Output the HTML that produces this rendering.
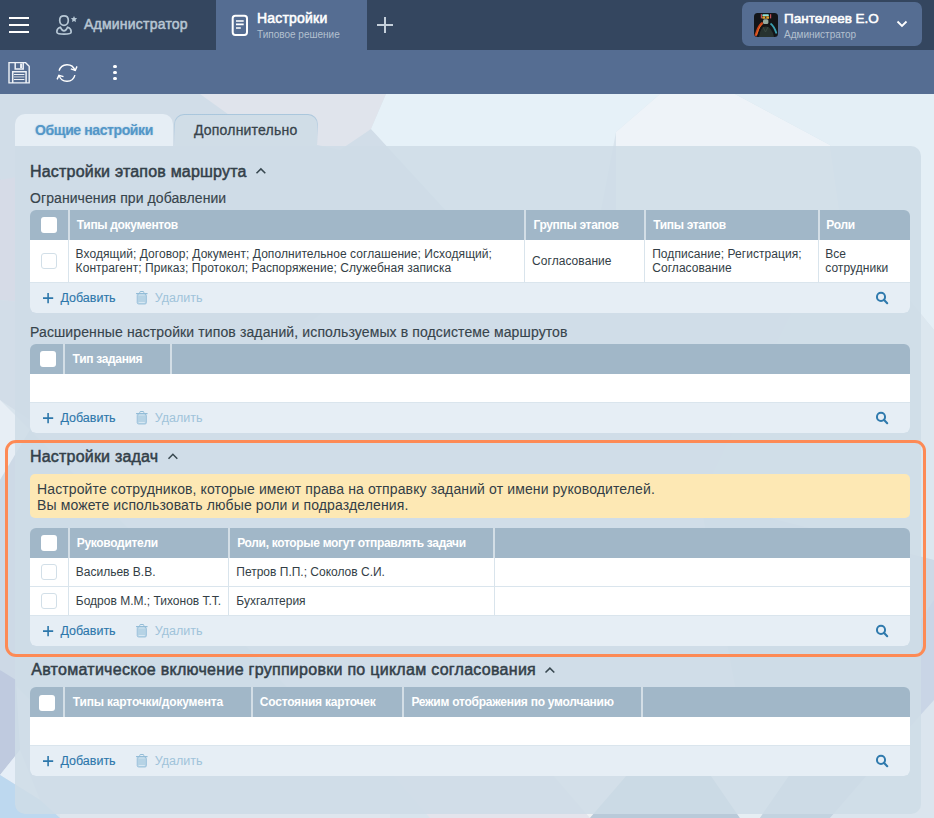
<!DOCTYPE html>
<html><head><meta charset="utf-8">
<style>
*{box-sizing:border-box;margin:0;padding:0}
html,body{width:934px;height:818px;overflow:hidden;font-family:"Liberation Sans",sans-serif;}
body{position:relative;background:#dbe6ef;}
.a{position:absolute}
.t{position:absolute;white-space:nowrap;line-height:1}
.h{font-size:16px;color:#334049;letter-spacing:0.2px;-webkit-text-stroke:0.5px #334049}
.sub{font-size:14px;color:#37444c;letter-spacing:0.08px;-webkit-text-stroke:0.15px #37444c}
.th{position:absolute;white-space:nowrap;line-height:1;color:#fff;font-weight:bold;font-size:12px;letter-spacing:-0.32px}
.td{position:absolute;white-space:nowrap;font-size:12px;line-height:14px;color:#333e46}
.thead{position:absolute;height:30px;background:#a1b7c8}
.hsep{position:absolute;width:2px;height:30px;background:#d3dee6}
.bsep{position:absolute;width:1px;background:#d9e4ec}
.cbh{position:absolute;width:16px;height:16px;border-radius:3px;background:#fff}
.cbr{position:absolute;width:16px;height:16px;border-radius:3px;background:#fff;border:1px solid #d2dfe8}
.row{position:absolute;background:#fff}
.rline{position:absolute;height:1px;background:#dae5ed}
.foot{position:absolute;height:30px;background:#e6eef5;border-radius:0 0 6px 6px}
.add{font-size:12.5px;color:#2d77ab;-webkit-text-stroke:0.12px #2d77ab}
.del{font-size:12.5px;color:#9fc3da}
</style></head>
<body>
<!-- background -->
<svg class="a" style="left:0;top:0" width="934" height="818" viewBox="0 0 934 818">
  <rect x="0" y="94" width="934" height="724" fill="#d9e4ed"/>
  <polygon points="0,94 386,94 371,129 450,215 300,330 0,300" fill="#d1dde8"/>
  <polygon points="0,180 230,140 300,330 0,300" fill="#d6dbe7"/>
  <polygon points="200,94 386,94 371,129 340,150 250,130" fill="#e0e4ec"/>
  <polygon points="386,94 660,94 616,132 600,215 450,215 371,129" fill="#e6f1f8"/>
  <polygon points="660,94 735,94 830,145 840,215 616,215 616,132" fill="#eef3f8"/>
  <polygon points="735,94 934,94 934,330 840,215 830,145" fill="#e4eff6"/>
  <polygon points="0,300 300,330 30,420 0,400" fill="#d2dde8"/>
  <polygon points="0,400 30,430 0,480" fill="#e7eef5"/>
  <polygon points="0,480 30,430 300,700 30,700 0,670" fill="#cdd9e6"/>
  <polygon points="0,670 16,680 20,750 0,775" fill="#bfcadf"/>
  <polygon points="0,775 20,750 40,800" fill="#e6eef7"/>
  <polygon points="0,775 40,800 60,818 0,818" fill="#bdd8ef"/>
  <polygon points="934,330 840,215 700,500 934,560" fill="#dce7ef"/>
  <polygon points="934,560 700,500 760,818 934,818" fill="#cdd9e6"/>
  <polygon points="921,620 934,600 934,818 921,818" fill="#c9d5e6"/>
  <polygon points="380,760 540,760 590,818 430,818" fill="#e4e4ec"/>
  <polygon points="540,760 640,760 590,818" fill="#f0f2f4"/>
  <polygon points="640,760 700,760 740,818 590,818" fill="#b9cad9"/>
  <polygon points="700,760 800,760 760,818 740,818" fill="#e6eef3"/>
  <polygon points="800,760 880,760 830,818 760,818" fill="#c3d3e0"/>
  <polygon points="880,760 934,700 934,818 830,818" fill="#dbe5ee"/>
  <rect x="60" y="814" width="330" height="4" fill="#dfe6ee"/>
</svg>

<div class="a" style="left:0;top:0;width:934px;height:50px;background:#34465f"></div>
<div class="a" style="left:0;top:50px;width:934px;height:44px;background:#556d92"></div>
<div class="a" style="left:216px;top:0;width:151px;height:50px;background:#556d92"></div>

<!-- hamburger -->
<div class="a" style="left:9px;top:17px;width:20px;height:2px;background:#fff"></div>
<div class="a" style="left:9px;top:24px;width:20px;height:2px;background:#fff"></div>
<div class="a" style="left:9px;top:31px;width:20px;height:2px;background:#fff"></div>

<!-- user star icon -->
<svg class="a" style="left:50px;top:10px" width="32" height="30" viewBox="0 0 32 30">
  <path d="M14 5.9C17 5.9 18.3 7.8 18.3 10.2C18.3 13.2 16.3 15.3 14 15.3C11.7 15.3 9.7 13.2 9.7 10.2C9.7 7.8 11 5.9 14 5.9Z" fill="none" stroke="#b7c8d6" stroke-width="1.7"/>
  <path d="M10.3 17.2Q12 20.9 14 20.9Q16 20.9 17.7 17.2Q21.1 18.4 21.1 21.2V22.3Q21.1 24.1 14 24.1Q6.9 24.1 6.9 22.3V21.2Q6.9 18.4 10.3 17.2Z" fill="none" stroke="#b7c8d6" stroke-width="1.7"/>
  <path d="M24 6l0.95 2.05 2.25 0.25-1.65 1.5 0.45 2.2-2-1.1-2 1.1 0.45-2.2-1.65-1.5 2.25-0.25z" fill="#b7c8d6"/>
</svg>
<div class="t" style="left:84px;top:17.2px;font-size:14px;letter-spacing:0.22px;color:#b8c6d3;-webkit-text-stroke:0.5px #b8c6d3">Администратор</div>

<!-- doc icon -->
<svg class="a" style="left:224px;top:8px" width="32" height="34" viewBox="0 0 32 34">
  <rect x="8.7" y="7.65" width="14.3" height="19.3" rx="2.6" fill="none" stroke="#fff" stroke-width="2"/>
  <path d="M12 13h7.7M12 16.4h7.7M12 20h4.8" stroke="#fff" stroke-width="1.6"/>
</svg>
<div class="t" style="left:257px;top:11.2px;font-size:14px;letter-spacing:0.2px;color:#fff;-webkit-text-stroke:0.55px #fff">Настройки</div>
<div class="t" style="left:257px;top:29.5px;font-size:10px;color:#b3c0cf">Типовое решение</div>
<!-- plus -->
<div class="a" style="left:377px;top:24px;width:16px;height:2px;background:#c5d0db"></div>
<div class="a" style="left:384px;top:17px;width:2px;height:16px;background:#c5d0db"></div>

<!-- user box -->
<div class="a" style="left:742px;top:2px;width:180px;height:44px;background:#556d92;border-radius:7px"></div>
<svg class="a" style="left:754px;top:13px" width="24" height="24" viewBox="0 0 24 24">
  <defs><clipPath id="av"><rect width="24" height="24" rx="3.5"/></clipPath>
  <filter id="gl" x="-50%" y="-50%" width="200%" height="200%"><feGaussianBlur stdDeviation="0.6"/></filter></defs>
  <g clip-path="url(#av)">
  <rect width="24" height="24" fill="#131518"/>
  <path d="M5 24Q6 14 12 13.5Q18 14 20 24Z" fill="#27322e"/>
  <path d="M1.5 23L4 16Q6 11 8.8 9.8" stroke="#c8421c" stroke-width="2.4" fill="none" filter="url(#gl)"/>
  <path d="M2.5 22L4.5 16.5Q6 12.5 8.5 11" stroke="#f07a2a" stroke-width="0.8" fill="none"/>
  <path d="M16.5 10.5Q20 13 22.5 20.5" stroke="#3a9fb0" stroke-width="1.8" fill="none" filter="url(#gl)"/>
  <rect x="9" y="6.3" width="5.4" height="4.8" rx="1.5" fill="#95ab9f"/>
  <rect x="8.3" y="1.2" width="6.6" height="1.9" rx="0.9" fill="#8fe2d8"/>
  <rect x="8.3" y="3.2" width="6.8" height="2.6" rx="0.9" fill="#e0a02e"/>
  <rect x="11" y="3.6" width="1.4" height="1.8" fill="#243442"/>
  <rect x="6.8" y="1.2" width="1.2" height="4.2" fill="#c0525a"/>
  <rect x="16" y="1.2" width="1.2" height="4.2" fill="#c0525a"/>
  <path d="M9 14L11.5 19L14 14" stroke="#3e4c44" stroke-width="0.8" fill="none"/>
  </g>
</svg>
<div class="t" style="left:784px;top:11.5px;font-size:13.5px;letter-spacing:0px;color:#fff;-webkit-text-stroke:0.55px #fff">Пантелеев Е.О</div>
<div class="t" style="left:784px;top:29.6px;font-size:10px;color:#b3c0cf">Администратор</div>
<svg class="a" style="left:894px;top:17px" width="16" height="14" viewBox="0 0 16 14"><path d="M3.5 4.5l4.5 4.5 4.5-4.5" fill="none" stroke="#fff" stroke-width="1.8"/></svg>

<!-- toolbar icons -->
<svg class="a" style="left:4px;top:58px" width="30" height="30" viewBox="0 0 30 30">
  <path d="M5 4.65H21.6L25.2 8.3V24.9H5Z" fill="none" stroke="#eef2f7" stroke-width="1.4"/>
  <path d="M11.2 4.65V10.9H19.2V4.65" fill="none" stroke="#eef2f7" stroke-width="1.5"/>
  <rect x="16.1" y="5.5" width="1.9" height="4.5" fill="#eef2f7"/>
  <path d="M8.7 24.9V13.8H22.1V24.9" fill="none" stroke="#eef2f7" stroke-width="1.5"/>
  <path d="M9.9 16.5H20.4M9.9 21.5H20.4" stroke="#eef2f7" stroke-width="1"/>
  <path d="M9.9 18.9H20.4" stroke="#c3cbd6" stroke-width="1.1"/>
</svg>
<svg class="a" style="left:52px;top:58px" width="30" height="30" viewBox="0 0 30 30">
  <path d="M7.1 12.8A8.2 8.2 0 0 1 22.9 12.6" fill="none" stroke="#fff" stroke-width="1.4"/>
  <path d="M18.8 10.9L23.3 12.3L25 8.4" fill="none" stroke="#fff" stroke-width="1.4"/>
  <path d="M22.9 17.1A8.2 8.2 0 0 1 7.1 17.4" fill="none" stroke="#fff" stroke-width="1.4"/>
  <path d="M11.5 18.6L6.9 17.4L5.1 21.4" fill="none" stroke="#fff" stroke-width="1.4"/>
</svg>
<div class="a" style="left:113px;top:64.7px;width:4px;height:3.6px;border-radius:1.5px;background:#fff"></div>
<div class="a" style="left:113px;top:70.7px;width:4px;height:3.6px;border-radius:1.5px;background:#fff"></div>
<div class="a" style="left:113px;top:76.7px;width:4px;height:3.6px;border-radius:1.5px;background:#fff"></div>

<!-- tabs -->
<div class="a" style="left:15px;top:114px;width:158px;height:32px;background:rgba(232,239,246,0.9);border-radius:10px 10px 0 0"></div>
<div class="a" style="left:174px;top:114px;width:144px;height:32px;background:linear-gradient(to bottom,#a9c6dc,rgba(169,198,220,0.2) 70%,rgba(169,198,220,0));border-radius:10px 10px 0 0"></div><div class="a" style="left:175px;top:115px;width:142px;height:31px;background:#d0dde7;border-radius:9px 9px 0 0"></div>
<div class="t" style="left:35px;top:123.2px;font-size:14px;font-weight:bold;letter-spacing:-0.4px;color:#5497c8;text-shadow:0 0 1.5px rgba(84,151,200,0.55)">Общие настройки</div>
<div class="t" style="left:194px;top:123.2px;font-size:14px;letter-spacing:0.2px;color:#37434b;-webkit-text-stroke:0.3px #37434b">Дополнительно</div>

<!-- main panel -->
<div class="a" style="left:15px;top:146px;width:906px;height:668px;background:rgba(206,220,230,0.86);border-radius:0 10px 10px 10px"></div>

<!-- Section 1 -->
<div class="t h" style="left:30px;top:164.3px">Настройки этапов маршрута</div>
<svg class="a" style="left:252px;top:164px" width="18" height="14" viewBox="0 0 18 14"><path d="M4.5 9.3l4.4-4.4 4.4 4.4" fill="none" stroke="#37474f" stroke-width="1.5"/></svg>
<div class="t sub" style="left:30px;top:190.9px">Ограничения при добавлении</div>

<!-- TABLES -->
<div class="a" style="left:30px;top:210px;width:880px;height:103px;border-radius:6px;overflow:hidden">
<div class="thead" style="left:0;top:0;width:880px"></div>
<div class="row" style="left:0;top:30px;width:880px;height:43px"></div>
<div class="rline" style="left:0;top:72px;width:880px"></div>
<div class="foot" style="left:0;top:73px;width:880px;height:30px"></div>
<div class="hsep" style="left:38px;top:0"></div>
<div class="hsep" style="left:494px;top:0"></div>
<div class="hsep" style="left:614px;top:0"></div>
<div class="hsep" style="left:788px;top:0"></div>
<div class="bsep" style="left:38px;top:30px;height:42px"></div>
<div class="bsep" style="left:494px;top:30px;height:42px"></div>
<div class="bsep" style="left:614px;top:30px;height:42px"></div>
<div class="bsep" style="left:788px;top:30px;height:42px"></div>
</div>
<div class="cbh" style="left:41px;top:217px"></div>
<div class="cbr" style="left:41px;top:253px"></div>
<div class="th" style="left:76.8px;top:218.84px;">Типы документов</div>
<div class="th" style="left:533.4px;top:218.84px;">Группы этапов</div>
<div class="th" style="left:653.2px;top:218.84px;">Типы этапов</div>
<div class="th" style="left:826.3px;top:218.84px;">Роли</div>
<div class="td" style="left:75.6px;top:246.5px;letter-spacing:0.06px">Входящий; Договор; Документ; Дополнительное соглашение; Исходящий;<br>Контрагент; Приказ; Протокол; Распоряжение; Служебная записка</div>
<div class="td" style="left:532px;top:254.3px;letter-spacing:0.06px">Согласование</div>
<div class="td" style="left:652.2px;top:246.5px;letter-spacing:0.06px">Подписание; Регистрация;<br>Согласование</div>
<div class="td" style="left:825.2px;top:246.5px;letter-spacing:0.06px">Все<br>сотрудники</div>
<svg class="a" style="left:43.1px;top:293px" width="11" height="11" viewBox="0 0 11 11"><path d="M5.1 0V10.2M0 5.1H10.2" stroke="#2d77ab" stroke-width="1.6"/></svg>
<div class="t add" style="left:60.4px;top:291.92px">Добавить</div>
<svg class="a" style="left:136.3px;top:291px" width="13" height="14" viewBox="0 0 13 14"><path d="M3.6 1.9L4.2 0.5H7.4L8 1.9" fill="none" stroke="#92bcd7" stroke-width="1"/><rect x="1.2" y="3.3" width="9.2" height="9.7" rx="1.4" fill="#b6d3e5" stroke="#98c0da" stroke-width="0.9"/><rect x="0" y="1.9" width="11.6" height="1.3" rx="0.4" fill="#92bcd7"/><rect x="2.7" y="3.5" width="6.1" height="0.8" fill="#e0edf5"/><rect x="2.7" y="11.1" width="6.1" height="0.8" fill="#e0edf5"/></svg>
<div class="t del" style="left:154.8px;top:291.92px">Удалить</div>
<svg class="a" style="left:874px;top:290px" width="16" height="16" viewBox="0 0 16 16"><circle cx="7" cy="6.9" r="4.05" fill="none" stroke="#2f7aad" stroke-width="2"/><path d="M9.9 9.8L13.2 13.2" stroke="#2f7aad" stroke-width="2.1" stroke-linecap="round"/></svg>
<div class="t sub" style="left:30px;top:324.6px;letter-spacing:0.12px">Расширенные настройки типов заданий, используемых в подсистеме маршрутов</div>
<div class="a" style="left:30px;top:344px;width:880px;height:89px;border-radius:6px;overflow:hidden">
<div class="thead" style="left:0;top:0;width:880px"></div>
<div class="row" style="left:0;top:30px;width:880px;height:29px"></div>
<div class="rline" style="left:0;top:58px;width:880px"></div>
<div class="foot" style="left:0;top:59px;width:880px;height:30px"></div>
<div class="hsep" style="left:33px;top:0"></div>
<div class="hsep" style="left:140px;top:0"></div>
</div>
<div class="cbh" style="left:40px;top:351px"></div>
<div class="th" style="left:72.6px;top:352.84px;">Тип задания</div>
<svg class="a" style="left:43.1px;top:413px" width="11" height="11" viewBox="0 0 11 11"><path d="M5.1 0V10.2M0 5.1H10.2" stroke="#2d77ab" stroke-width="1.6"/></svg>
<div class="t add" style="left:60.4px;top:411.92px">Добавить</div>
<svg class="a" style="left:136.3px;top:411px" width="13" height="14" viewBox="0 0 13 14"><path d="M3.6 1.9L4.2 0.5H7.4L8 1.9" fill="none" stroke="#92bcd7" stroke-width="1"/><rect x="1.2" y="3.3" width="9.2" height="9.7" rx="1.4" fill="#b6d3e5" stroke="#98c0da" stroke-width="0.9"/><rect x="0" y="1.9" width="11.6" height="1.3" rx="0.4" fill="#92bcd7"/><rect x="2.7" y="3.5" width="6.1" height="0.8" fill="#e0edf5"/><rect x="2.7" y="11.1" width="6.1" height="0.8" fill="#e0edf5"/></svg>
<div class="t del" style="left:154.8px;top:411.92px">Удалить</div>
<svg class="a" style="left:874px;top:410px" width="16" height="16" viewBox="0 0 16 16"><circle cx="7" cy="6.9" r="4.05" fill="none" stroke="#2f7aad" stroke-width="2"/><path d="M9.9 9.8L13.2 13.2" stroke="#2f7aad" stroke-width="2.1" stroke-linecap="round"/></svg>
<div class="a" style="left:5px;top:440px;width:921px;height:217px;border:3px solid #fd8a55;border-radius:11px"></div>
<div class="t h" style="left:30px;top:448.7px">Настройки задач</div>
<svg class="a" style="left:164px;top:450px" width="18" height="14" viewBox="0 0 18 14"><path d="M4.5 8.7l4.4-4.4 4.4 4.4" fill="none" stroke="#37474f" stroke-width="1.5"/></svg>
<div class="a" style="left:30px;top:474px;width:880px;height:44px;background:#fde8b4;border-radius:5px"></div>
<div class="td" style="left:37px;top:482.1px;font-size:14px;line-height:15.4px;letter-spacing:0.12px;color:#333e46">Настройте сотрудников, которые имеют права на отправку заданий от имени руководителей.<br>Вы можете использовать любые роли и подразделения.</div>
<div class="a" style="left:30px;top:528px;width:880px;height:118px;border-radius:6px;overflow:hidden">
<div class="thead" style="left:0;top:0;width:880px"></div>
<div class="row" style="left:0;top:30px;width:880px;height:29px"></div>
<div class="rline" style="left:0;top:58px;width:880px"></div>
<div class="row" style="left:0;top:59px;width:880px;height:29px"></div>
<div class="rline" style="left:0;top:87px;width:880px"></div>
<div class="foot" style="left:0;top:88px;width:880px;height:30px"></div>
<div class="hsep" style="left:38px;top:0"></div>
<div class="hsep" style="left:198px;top:0"></div>
<div class="hsep" style="left:463px;top:0"></div>
<div class="bsep" style="left:38px;top:30px;height:57px"></div>
<div class="bsep" style="left:198px;top:30px;height:57px"></div>
<div class="bsep" style="left:464px;top:30px;height:57px"></div>
</div>
<div class="cbh" style="left:41px;top:535px"></div>
<div class="cbr" style="left:41px;top:564px"></div>
<div class="cbr" style="left:41px;top:593px"></div>
<div class="th" style="left:76.8px;top:536.84px;">Руководители</div>
<div class="th" style="left:237.2px;top:536.84px;">Роли, которые могут отправлять задачи</div>
<div class="td" style="left:75.8px;top:565.1px;">Васильев В.В.</div>
<div class="td" style="left:236.3px;top:565.1px;">Петров П.П.; Соколов С.И.</div>
<div class="td" style="left:75.8px;top:593.9px;">Бодров М.М.; Тихонов Т.Т.</div>
<div class="td" style="left:236.3px;top:593.9px;">Бухгалтерия</div>
<svg class="a" style="left:43.1px;top:626px" width="11" height="11" viewBox="0 0 11 11"><path d="M5.1 0V10.2M0 5.1H10.2" stroke="#2d77ab" stroke-width="1.6"/></svg>
<div class="t add" style="left:60.4px;top:624.92px">Добавить</div>
<svg class="a" style="left:136.3px;top:624px" width="13" height="14" viewBox="0 0 13 14"><path d="M3.6 1.9L4.2 0.5H7.4L8 1.9" fill="none" stroke="#92bcd7" stroke-width="1"/><rect x="1.2" y="3.3" width="9.2" height="9.7" rx="1.4" fill="#b6d3e5" stroke="#98c0da" stroke-width="0.9"/><rect x="0" y="1.9" width="11.6" height="1.3" rx="0.4" fill="#92bcd7"/><rect x="2.7" y="3.5" width="6.1" height="0.8" fill="#e0edf5"/><rect x="2.7" y="11.1" width="6.1" height="0.8" fill="#e0edf5"/></svg>
<div class="t del" style="left:154.8px;top:624.92px">Удалить</div>
<svg class="a" style="left:874px;top:623px" width="16" height="16" viewBox="0 0 16 16"><circle cx="7" cy="6.9" r="4.05" fill="none" stroke="#2f7aad" stroke-width="2"/><path d="M9.9 9.8L13.2 13.2" stroke="#2f7aad" stroke-width="2.1" stroke-linecap="round"/></svg>
<div class="t h" style="left:31.2px;top:662px;letter-spacing:0.28px">Автоматическое включение группировки по циклам согласования</div>
<svg class="a" style="left:541px;top:663.5px" width="18" height="14" viewBox="0 0 18 14"><path d="M4.5 8.5l4.4-4.4 4.4 4.4" fill="none" stroke="#37474f" stroke-width="1.5"/></svg>
<div class="a" style="left:30px;top:687px;width:880px;height:89px;border-radius:6px;overflow:hidden">
<div class="thead" style="left:0;top:0;width:880px"></div>
<div class="row" style="left:0;top:30px;width:880px;height:29px"></div>
<div class="rline" style="left:0;top:58px;width:880px"></div>
<div class="foot" style="left:0;top:59px;width:880px;height:30px"></div>
<div class="hsep" style="left:33px;top:0"></div>
<div class="hsep" style="left:221px;top:0"></div>
<div class="hsep" style="left:372px;top:0"></div>
<div class="hsep" style="left:611px;top:0"></div>
</div>
<div class="cbh" style="left:39px;top:695px"></div>
<div class="th" style="left:72.8px;top:695.84px;letter-spacing:-0.17px;">Типы карточки/документа</div>
<div class="th" style="left:259.8px;top:695.84px;letter-spacing:-0.22px;">Состояния карточек</div>
<div class="th" style="left:411.4px;top:695.84px;letter-spacing:-0.25px;">Режим отображения по умолчанию</div>
<svg class="a" style="left:43.1px;top:756px" width="11" height="11" viewBox="0 0 11 11"><path d="M5.1 0V10.2M0 5.1H10.2" stroke="#2d77ab" stroke-width="1.6"/></svg>
<div class="t add" style="left:60.4px;top:754.92px">Добавить</div>
<svg class="a" style="left:136.3px;top:754px" width="13" height="14" viewBox="0 0 13 14"><path d="M3.6 1.9L4.2 0.5H7.4L8 1.9" fill="none" stroke="#92bcd7" stroke-width="1"/><rect x="1.2" y="3.3" width="9.2" height="9.7" rx="1.4" fill="#b6d3e5" stroke="#98c0da" stroke-width="0.9"/><rect x="0" y="1.9" width="11.6" height="1.3" rx="0.4" fill="#92bcd7"/><rect x="2.7" y="3.5" width="6.1" height="0.8" fill="#e0edf5"/><rect x="2.7" y="11.1" width="6.1" height="0.8" fill="#e0edf5"/></svg>
<div class="t del" style="left:154.8px;top:754.92px">Удалить</div>
<svg class="a" style="left:874px;top:753px" width="16" height="16" viewBox="0 0 16 16"><circle cx="7" cy="6.9" r="4.05" fill="none" stroke="#2f7aad" stroke-width="2"/><path d="M9.9 9.8L13.2 13.2" stroke="#2f7aad" stroke-width="2.1" stroke-linecap="round"/></svg>
</body></html>
